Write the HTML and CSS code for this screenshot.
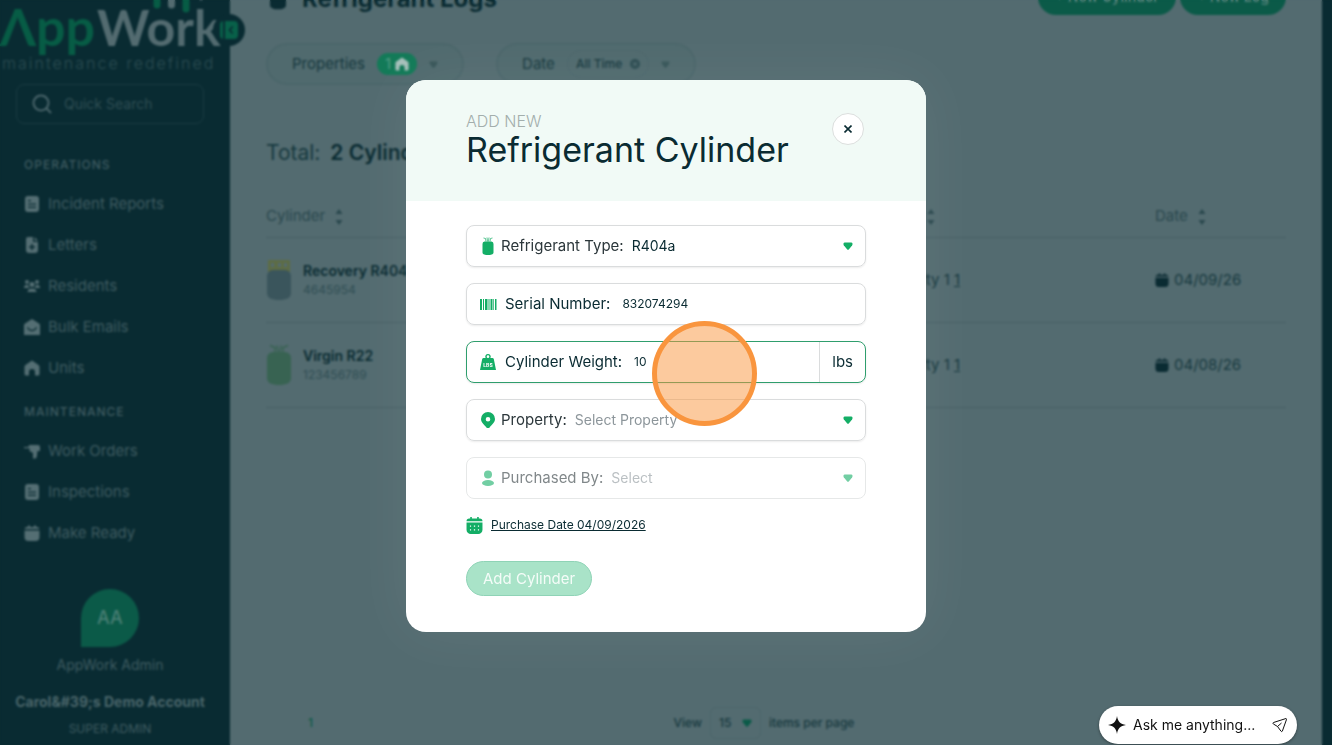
FILE: index.html
```html
<!DOCTYPE html>
<html lang="en">
<head>
<meta charset="utf-8">
<meta name="viewport" content="width=device-width, initial-scale=1">
<title>AppWork – Refrigerant Logs</title>
<link rel="stylesheet" href="styles.css">
</head>
<body>
<svg class="sprite" aria-hidden="true">
  <symbol id="i-doc" viewBox="0 0 16 16"><path fill-rule="evenodd" d="M4 0h8a3 3 0 0 1 3 3v10a3 3 0 0 1-3 3H4a3 3 0 0 1-3-3V3a3 3 0 0 1 3-3zm0 4v1.300h3V4zm0 3.400v1.300h8V7.400zm0 3.400v1.300h8v-1.300z"/></symbol>
  <symbol id="i-letter" viewBox="0 0 16 16"><path fill-rule="evenodd" d="M4 0h5v5h5v8a3 3 0 0 1-3 3H5a3 3 0 0 1-3-3V2a2 2 0 0 1 2-2zm3.200 7v2.200H5v1.600h2.200V13h1.600v-2.200H11V9.200H8.800V7zM10.500 0 14 3.800h-3.500z"/></symbol>
  <symbol id="i-people" viewBox="0 0 16 16"><circle cx="3" cy="4" r="2"/><circle cx="13" cy="4" r="2"/><circle cx="8" cy="6.500" r="2.500"/><path d="M0 9.500C0 7.500 1.500 7 4 7c.5 1.500 1 2.500 2 3H0zM16 9.500C16 7.500 14.500 7 12 7c-.5 1.500-1 2.500-2 3h6zM3.500 14c0-2.500 2-3.500 4.500-3.500s4.500 1 4.500 3.500z"/></symbol>
  <symbol id="i-mail" viewBox="0 0 16 16"><path fill-rule="evenodd" d="M8 0l7 4.500a2 2 0 0 1 1 1.800V16H0V6.300a2 2 0 0 1 1-1.800zM3 8.500c1 2.500 3 3.800 5 3.800s4-1.300 5-3.800l-1-.6c-1 1.900-2.400 2.900-4 2.900S5 9.800 4 7.900z"/></symbol>
  <symbol id="i-home" viewBox="0 0 16 16"><path d="M8 0.500 14.500 5a2 2 0 0 1 1 1.700V14a1.500 1.500 0 0 1-1.500 1.500h-3V12a3 3 0 0 0-6 0v3.500H2A1.500 1.500 0 0 1 .5 14V6.700a2 2 0 0 1 1-1.700z"/></symbol>
  <symbol id="i-drill" viewBox="0 0 16 16"><path d="M0 4h4l1.500-2H14a2 2 0 0 1 2 2v4h-2.500l-.8 6a2 2 0 0 1-2 1.500H9V10L5.500 8V5.200H0z"/></symbol>
  <symbol id="i-cal" viewBox="0 0 16 16"><path d="M3 2h1V.500h2V2h4V.500h2V2h1a2.500 2.500 0 0 1 2.500 2H.5A2.500 2.500 0 0 1 3 2zM.5 5.500h15V12a4 4 0 0 1-4 4h-7a4 4 0 0 1-4-4z"/></symbol>
  <symbol id="i-caldots" viewBox="0 0 16 16"><path fill-rule="evenodd" d="M3 1.500h1V0h1.500v1.500h5V0H12v1.500h1A2.500 2.500 0 0 1 15.500 4H.5A2.500 2.500 0 0 1 3 1.500zM.5 5.200h15V12a4 4 0 0 1-4 4h-7a4 4 0 0 1-4-4zM3.700 8v1.100h1.100V8zm3.700 0v1.100h1.200V8zM11.200 8v1.100h1.100V8zm-7.500 3.500v1.100h1.100v-1.100zm3.700 0v1.100h1.200v-1.100zm3.800 0v1.100h1.100v-1.100z"/></symbol>
  <symbol id="i-heart" viewBox="0 0 10 8"><path d="M1.800.5h6.400C9.600.5 9.900 2 9.200 3.200L6 7.300c-.6.700-1.400.7-2 0L.8 3.200C.1 2 .4.500 1.800.500z"/></symbol>
  <symbol id="i-sort" viewBox="0 0 8 18"><path d="M4 1l3.500 5h-7zM4 17l3.500-5h-7z"/></symbol>
  <symbol id="i-tank" viewBox="0 0 12 18"><path d="M2.500 4.500h7A2.500 2.500 0 0 1 11.500 7v8.500C11.500 17.500 8.500 18 6 18S.5 17.500.5 15.500V7a2.500 2.500 0 0 1 2-2.500z"/><path d="M1.500 1l2 .5.500 3M10.500 1l-2 .5-.5 3M5 .5l.5 4M7 .5l-.5 4" fill="none" stroke="currentColor" stroke-width=".7"/></symbol>
  <symbol id="i-tankbig" viewBox="0 0 26 42"><path d="M7 8h12a6 6 0 0 1 6 6v20c0 5-5 7-12 7S1 39 1 34V14a6 6 0 0 1 6-6z"/><path d="M4 1.500l5 2V8M22 1.500l-5 2V8M11 1.500L12 8M15 1.500L14 8" fill="none" stroke="currentColor" stroke-width="1.500"/></symbol>
</svg>

<div class="app">
  <aside class="sidebar">
    <div class="brand">
      <svg class="logo" viewBox="0 0 230 72" role="img" aria-label="AppWork maintenance redefined">
        <text class="logo-word logo-green" x="0" y="46">Λpp</text>
        <text class="logo-word logo-gray" x="97" y="46">Work</text>
        <g stroke-width="7" stroke-linecap="round">
          <path class="bar-green" d="M157-5V5M186-5V9"/>
          <path class="bar-gray" d="M171.500-5V5M201-5V-3"/>
        </g>
        <text class="logo-tag" x="2" y="69">maintenance redefined</text>
      </svg>
      <button class="collapse" type="button" aria-label="Collapse menu">
        <svg viewBox="0 0 20 20" width="20" height="20"><path d="M4 1v18a4 4 0 0 1-3-4V5a4 4 0 0 1 3-4z"/><path fill-rule="evenodd" d="M6 1h9a4 4 0 0 1 4 4v10a4 4 0 0 1-4 4H6zm7 5-3.500 4 3.500 4 1.200-1L11.600 10l2.600-3z"/></svg>
      </button>
    </div>
    <label class="search">
      <svg viewBox="0 0 20 20" width="20" height="20"><circle cx="9" cy="9" r="7.500"/><path d="M14.500 14.500 19 19"/></svg>
      <input type="text" placeholder="Quick Search" aria-label="Quick Search">
    </label>
    <nav class="nav">
      <h2 class="nav-title">OPERATIONS</h2>
      <ul class="nav-list">
        <li><a href="#"><svg><use href="#i-doc"/></svg>Incident Reports</a></li>
        <li><a href="#"><svg><use href="#i-letter"/></svg>Letters</a></li>
        <li><a href="#"><svg><use href="#i-people"/></svg>Residents</a></li>
        <li><a href="#"><svg><use href="#i-mail"/></svg>Bulk Emails</a></li>
        <li><a href="#"><svg><use href="#i-home"/></svg>Units</a></li>
      </ul>
      <h2 class="nav-title">MAINTENANCE</h2>
      <ul class="nav-list">
        <li><a href="#"><svg><use href="#i-drill"/></svg>Work Orders</a></li>
        <li><a href="#"><svg><use href="#i-doc"/></svg>Inspections</a></li>
        <li><a href="#"><svg><use href="#i-cal"/></svg>Make Ready</a></li>
      </ul>
    </nav>
    <div class="account">
      <div class="avatar">AA</div>
      <div class="user">AppWork Admin</div>
      <div class="company">Carol&amp;#39;s Demo Account</div>
      <div class="role">SUPER ADMIN</div>
    </div>
  </aside>

  <main class="main">
    <header class="page-head">
      <svg class="head-icon"><use href="#i-tankbig"/></svg>
      <h1>Refrigerant Logs</h1>
      <div class="actions">
        <button type="button">+ New Cylinder</button>
        <button type="button">+ New Log</button>
      </div>
    </header>
    <div class="filters">
      <button class="filter" type="button">Properties
        <span class="count">1 <svg><use href="#i-home"/></svg></span>
        <svg class="caret"><use href="#i-heart"/></svg>
      </button>
      <button class="filter" type="button">Date
        <span class="chip">All Time <svg viewBox="0 0 10 10"><path fill-rule="evenodd" d="M5 0a5 5 0 1 1 0 10A5 5 0 0 1 5 0zM3.500 2.700l-.8.800L4.200 5 2.700 6.500l.8.800L5 5.800l1.500 1.500.8-.8L5.800 5l1.500-1.500-.8-.8L5 4.200z"/></svg></span>
        <svg class="caret"><use href="#i-heart"/></svg>
      </button>
    </div>
    <p class="total">Total: <strong>2 Cylinders</strong></p>
    <table class="logs">
      <colgroup><col class="c-cyl"><col class="c-prop"><col class="c-date"></colgroup>
      <thead>
        <tr>
          <th>Cylinder <svg><use href="#i-sort"/></svg></th>
          <th>Place <svg><use href="#i-sort"/></svg></th>
          <th>Date <svg><use href="#i-sort"/></svg></th>
        </tr>
      </thead>
      <tbody>
        <tr>
          <td><div class="cyl"><svg class="tank tank-gray" viewBox="0 0 26 42"><path class="cap" fill-rule="evenodd" d="M2 1h22v12H2zM5 4v4h3V4zm7 0v4h3V4zm6 0v4h3V4z"/><path d="M7 11h12a6 6 0 0 1 6 6v17c0 5-5 7-12 7S1 39 1 34V17a6 6 0 0 1 6-6z"/></svg><div><b>Recovery R404a</b><small>4645954</small></div></div></td>
          <td>Property 1 <a href="#">1</a></td>
          <td><span class="date"><svg><use href="#i-cal"/></svg>04/09/26</span></td>
        </tr>
        <tr>
          <td><div class="cyl"><svg class="tank tank-green"><use href="#i-tankbig"/></svg><div><b>Virgin R22</b><small>123456789</small></div></div></td>
          <td>Property 1 <a href="#">1</a></td>
          <td><span class="date"><svg><use href="#i-cal"/></svg>04/08/26</span></td>
        </tr>
      </tbody>
    </table>
    <footer class="pager">
      <a class="page" href="#">1</a>
      <label class="per-page">View
        <span class="size"><select><option>15</option></select><svg><use href="#i-heart"/></svg></span>
        items per page
      </label>
    </footer>
  </main>
</div>

<div class="overlay">
  <section class="modal" role="dialog" aria-labelledby="modal-title">
    <header class="modal-head">
      <div>
        <p class="eyebrow">ADD NEW</p>
        <h2 id="modal-title">Refrigerant Cylinder</h2>
      </div>
      <button class="close" type="button" aria-label="Close"><svg viewBox="0 0 8 8" width="8" height="8" stroke="currentColor" stroke-width="1.600"><path d="M.5.500l7 7M7.500.500l-7 7"/></svg></button>
    </header>
    <form class="modal-body">
      <div class="field">
        <svg class="lead"><use href="#i-tank"/></svg>
        <label for="type">Refrigerant Type:</label>
        <select id="type"><option>R404a</option></select>
        <svg class="arrow"><use href="#i-heart"/></svg>
      </div>
      <div class="field field-text">
        <svg class="lead" viewBox="0 0 18 18"><path d="M1 4h2v11H1zM4 4h1v11H4zM6 4h2.500v11H6zM9.500 4h1v11h-1zM11.500 4h2v11h-2zM14.300 4h.7v11h-.7zM16 4h1.500v11H16z"/></svg>
        <label for="serial">Serial Number:</label>
        <input id="serial" type="text" value="832074294">
      </div>
      <div class="field field-text active">
        <svg class="lead" viewBox="0 0 18 18"><path fill-rule="evenodd" d="M9 1a2.700 2.700 0 0 1 2.400 4h2a1.500 1.500 0 0 1 1.400 1L17 17H1L3.200 6a1.500 1.500 0 0 1 1.400-1h2A2.700 2.700 0 0 1 9 1zm0 1.300a1.300 1.300 0 1 0 0 2.700 1.300 1.300 0 0 0 0-2.700z"/><text class="lbs" x="9" y="13.500">LBS</text></svg>
        <label for="weight">Cylinder Weight:</label>
        <input id="weight" type="text" value="10">
        <span class="unit">lbs</span>
      </div>
      <div class="field">
        <svg class="lead" viewBox="0 0 18 18"><path fill-rule="evenodd" d="M9 1a7 7 0 0 1 7 7c0 3.500-3.500 6-5.200 8.200a2.300 2.300 0 0 1-3.600 0C5.500 14 2 11.500 2 8a7 7 0 0 1 7-7zm0 5a2.300 2.300 0 1 0 0 4.600A2.300 2.300 0 0 0 9 6z"/></svg>
        <label for="property">Property:</label>
        <select id="property" class="empty"><option>Select Property</option></select>
        <svg class="arrow"><use href="#i-heart"/></svg>
      </div>
      <div class="field disabled">
        <svg class="lead" viewBox="0 0 18 18"><circle cx="9" cy="5.500" r="4"/><ellipse cx="9" cy="14" rx="6" ry="3"/></svg>
        <label for="buyer">Purchased By:</label>
        <select id="buyer" class="empty" disabled><option>Select</option></select>
        <svg class="arrow"><use href="#i-heart"/></svg>
      </div>
      <a class="purchase" href="#"><svg><use href="#i-caldots"/></svg><span>Purchase Date 04/09/2026</span></a>
      <button class="submit" type="submit" disabled>Add Cylinder</button>
    </form>
    <div class="click-mark"></div>
  </section>
</div>

<form class="ask">
  <svg viewBox="0 0 18 18" width="18" height="18"><path d="M9 0c.8 5.500 3.200 8.200 9 9-5.800.8-8.200 3.500-9 9-.8-5.500-3.200-8.200-9-9 5.800-.8 8.200-3.500 9-9z"/></svg>
  <input type="text" placeholder="Ask me anything..." aria-label="Ask me anything">
  <button type="button" aria-label="Send"><svg viewBox="0 0 16 16" width="16" height="16"><path d="M14 1.500 1.500 5.500a.8.800 0 0 0-.2 1.400L5.500 9.500 9 14.200a.8.800 0 0 0 1.400-.2L14.500 2.500a.8.800 0 0 0-.5-1zM5.500 9.500l4-3.500"/></svg></button>
</form>
</body>
</html>
```
FILE: styles.css
```css
* { box-sizing: border-box; }
body {
  margin: 0;
  height: 100vh;
  overflow: hidden;
  background: #536b70;
  font: 14px/20px Inter, "Noto Sans", sans-serif;
  color: #0a2b32;
}
h1, h2, p, ul { margin: 0; padding: 0; }
ul { list-style: none; }
a { color: inherit; }
svg { fill: currentColor; flex: none; }
button, input, select { font: inherit; color: inherit; }
select { appearance: none; border: 0; background: none; padding: 0; outline: 0; }
input { border: 0; background: none; padding: 0; outline: 0; min-width: 0; }
.sprite { position: absolute; width: 0; height: 0; }

/* App behind the dialog */
.app {
  display: grid;
  grid-template-columns: 230px 1fr;
  height: 100vh;
  border-right: 10px solid #092b32;
}
.sidebar { background: #092b32; color: #3f5b61; }
.brand { position: relative; height: 72px; }
.logo { display: block; width: 100%; height: 72px; overflow: visible; }
.logo-word { font: 700 50px Lato, sans-serif; }
.logo-green { fill: #075c45; font-size: 52px; }
.logo-gray { fill: #536b70; }
.logo-tag { font: 300 16px Inter, sans-serif; letter-spacing: 2px; fill: #2c4d53; }
.bar-green { stroke: #075c45; }
.bar-gray { stroke: #536b70; }
.collapse {
  position: absolute;
  top: 14px;
  right: -15px;
  display: grid;
  place-items: center;
  width: 32px;
  height: 32px;
  padding: 0;
  border: 0;
  border-radius: 50%;
  background: #092b32;
  color: #086049;
}
.search {
  display: flex;
  align-items: center;
  gap: 12px;
  height: 40px;
  margin: 12px 26px 0 16px;
  padding: 0 15px;
  border: 1px solid #1a3b42;
  border-radius: 8px;
  color: #49646a;
}
.search svg { fill: none; stroke: currentColor; stroke-width: 2; }
.search input { width: 100%; }
.search input::placeholder { color: #2f4e54; opacity: 1; }
.nav { padding-top: 31px; }
.nav-title { padding-left: 24px; font-size: 12px; line-height: 20px; font-weight: 500; letter-spacing: 1px; }
.nav-list { padding: 8px 0 14px 24px; font-size: 15px; }
.nav-list a {
  display: flex;
  align-items: center;
  gap: 8px;
  height: 41px;
  text-decoration: none;
}
.nav-list svg { width: 16px; height: 16px; color: #546e73; }
.account { padding: 22px 10px 0 0; text-align: center; }
.avatar {
  width: 58px;
  margin: 0 auto 8px;
  border-radius: 50% 50% 50% 0;
  background: #0b5a48;
  color: #4a7f75;
  font-size: 18px;
  font-weight: 500;
  line-height: 58px;
}
.company { margin-top: 17px; font-weight: 700; color: #4a656a; }
.role { margin-top: 7px; font-size: 12px; }

.main { display: flex; flex-direction: column; padding: 0 36px; color: #17393f; }
.page-head { display: flex; align-items: flex-end; height: 15px; }
.head-icon { width: 24px; height: 28px; margin-bottom: 5px; color: #0a2b32; }
.page-head h1 { margin-left: 12px; font-size: 24px; line-height: 32px; font-weight: 700; color: #0a2b32; }
.actions { display: flex; gap: 4px; margin-left: auto; }
.actions button {
  height: 36px;
  padding: 0 17px;
  border: 0;
  border-radius: 18px;
  background: #0b5a48;
  color: #4d7f76;
  font-weight: 600;
}
.filters { display: flex; gap: 32px; margin-top: 28px; }
.filter {
  display: flex;
  align-items: center;
  gap: 12px;
  height: 42px;
  padding: 0 24px;
  border: 2px solid #4b666a;
  border-radius: 21px;
  background: #506a6e;
  font-size: 15px;
}
.count {
  display: flex;
  align-items: center;
  gap: 4px;
  height: 22px;
  padding: 0 8px;
  border-radius: 11px;
  background: #137a58;
  color: #519b83;
}
.count svg { width: 14px; height: 14px; color: #a7c0bb; }
.chip {
  display: flex;
  align-items: center;
  gap: 8px;
  height: 28px;
  padding: 0 8px;
  border: 1px solid #4c666b;
  border-radius: 14px;
  font-size: 12px;
  font-weight: 500;
}
.chip svg { width: 10px; height: 10px; color: #2c4c52; }
.caret { width: 9px; height: 7px; color: #385659; }
.total { margin-top: 54px; font-size: 21px; line-height: 28px; }
.total strong { margin-left: 4px; font-weight: 600; color: #0a2b32; }
.logs { width: 100%; margin-top: 28px; border-collapse: collapse; table-layout: fixed; }
.c-cyl { width: 60%; }
.c-date { width: 131px; }
.logs th { height: 42px; padding: 0; text-align: left; font-size: 15px; font-weight: 400; color: #2a484e; border-bottom: 1px solid #475f65; }
.logs th svg { width: 8px; height: 18px; margin-left: 6px; vertical-align: middle; }
.logs td { height: 85px; padding: 0; border-bottom: 1px solid #475f65; font-size: 15px; }
.cyl { display: flex; align-items: center; gap: 11px; font-size: 14px; }
.cyl b { display: block; font-weight: 600; color: #0a2b32; }
.cyl small { display: block; font-size: 12px; line-height: 18px; font-weight: 400; color: #304e54; }
.tank { width: 26px; height: 42px; }
.tank-gray { color: #3a555c; }
.tank-green { color: #386352; }
.cap { fill: #5d6c45; }
.date { display: flex; align-items: center; gap: 5px; }
.date svg { width: 14px; height: 14px; color: #0a2b32; }
.pager {
  display: grid;
  grid-template-columns: 1fr auto 1fr;
  align-items: center;
  margin: auto 24px 6px 0;
  font-size: 12px;
  font-weight: 500;
}
.page { padding-left: 42px; color: #0b5a48; text-decoration: none; }
.per-page { display: flex; align-items: center; gap: 8px; }
.size { display: flex; align-items: center; gap: 10px; height: 32px; padding: 0 8px; border: 1px solid #4c666b; border-radius: 6px; }
.size svg { width: 10px; height: 8px; color: #0b5a48; }

/* Dialog */
.overlay { position: fixed; inset: 0; padding: 80px 16px 0; backdrop-filter: blur(1px); }
.modal {
  position: relative;
  max-width: 520px;
  margin: 0 auto;
  border-radius: 20px;
  background: #fff;
  box-shadow: 0 0 60px #ffffff12;
}
.modal-head {
  display: flex;
  justify-content: space-between;
  align-items: flex-start;
  padding: 32px 62px 32px 60px;
  border-radius: 20px 20px 0 0;
  background: #f1faf6;
}
.eyebrow { font-size: 16px; line-height: 18px; font-weight: 300; color: #a3aeac; }
.modal-head h2 { font-size: 34px; line-height: 39px; font-weight: 400; }
.close {
  display: grid;
  place-items: center;
  width: 32px;
  height: 32px;
  margin-top: 1px;
  padding: 0;
  border: 1px solid #dcdfde;
  border-radius: 50%;
  background: #fff;
}
.modal-body { display: flex; flex-direction: column; gap: 16px; padding: 24px 60px 36px; font-size: 15px; }
.field {
  display: flex;
  align-items: center;
  height: 42px;
  padding: 0 12px;
  border: 1px solid #dadcdd;
  border-radius: 8px;
  box-shadow: 0 1px 2px #00000014;
}
.field label { margin-left: 4px; color: #2c373b; }
.field select { flex: 1; min-width: 0; margin-left: 8px; font-size: 14px; color: #0a2b32; }
.field select.empty { color: #8d969b; opacity: 1; }
.lead { width: 18px; height: 18px; color: #14ae66; }
.arrow { width: 10px; height: 8px; color: #14ae66; }
.field.field-text label { margin-left: 8px; color: #0a2b32; }
.field-text input { flex: 1; margin-left: 12px; font-size: 12px; }
.active { border-color: #2f9e6d; }
.lbs { font: 700 5px Inter, sans-serif; fill: #fff; text-anchor: middle; }
.unit { padding-left: 12px; border-left: 1px solid #dadcdd; line-height: 40px; }
.disabled > * { opacity: .6; }
.disabled select.empty { opacity: .6; }
.disabled { border-color: #e6e8e8; box-shadow: none; }
.purchase { display: flex; align-items: center; align-self: flex-start; gap: 8px; font-size: 12px; line-height: 20px; }
.purchase svg { width: 17px; height: 17px; color: #14ae66; }
.submit {
  align-self: flex-start;
  height: 35px;
  margin-top: 10px;
  padding: 0 16px;
  border: 1px solid #8fd3b6;
  border-radius: 18px;
  background: #a9e3c8;
  color: #f4fcf8;
}
.click-mark {
  position: absolute;
  top: 241px;
  left: 246px;
  width: 105px;
  height: 105px;
  border: 5px solid #f9953e;
  border-radius: 50%;
  background: #f9953e80;
  pointer-events: none;
}

.ask {
  position: fixed;
  right: 35px;
  bottom: 1px;
  display: flex;
  align-items: center;
  gap: 7px;
  width: 198px;
  height: 38px;
  padding: 0 9px;
  border-radius: 19px;
  background: #fff;
  box-shadow: 0 1px 3px #00000066;
  color: #111;
}
.ask input { flex: 1; }
.ask input::placeholder { color: #111; opacity: 1; }
.ask button { display: flex; padding: 0; border: 0; background: none; }
.ask button svg { fill: none; stroke: currentColor; stroke-width: 1; }
```
